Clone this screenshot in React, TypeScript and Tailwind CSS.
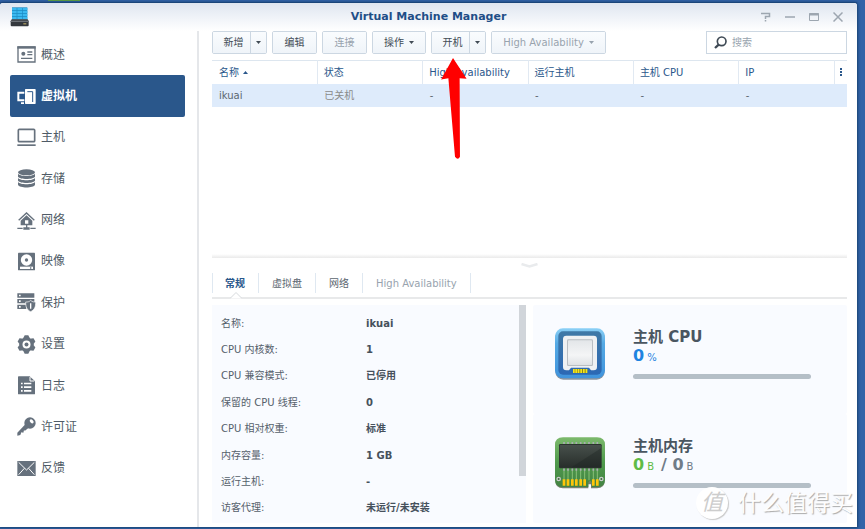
import type { ReactNode } from "react";
import clsx from "clsx";

const navItems = [
  { id: "overview", label: "概述" },
  { id: "vm", label: "虚拟机" },
  { id: "host", label: "主机" },
  { id: "storage", label: "存储" },
  { id: "network", label: "网络" },
  { id: "image", label: "映像" },
  { id: "protection", label: "保护" },
  { id: "settings", label: "设置" },
  { id: "log", label: "日志" },
  { id: "license", label: "许可证" },
  { id: "feedback", label: "反馈" },
];

const columns = ["状态", "High Availability", "运行主机", "主机 CPU", "IP"];

const tabs = [
  { label: "常规", active: true },
  { label: "虚拟盘" },
  { label: "网络" },
  { label: "High Availability", disabled: true },
];

const details = [
  ["名称:", "ikuai"],
  ["CPU 内核数:", "1"],
  ["CPU 兼容模式:", "已停用"],
  ["保留的 CPU 线程:", "0"],
  ["CPU 相对权重:", "标准"],
  ["内存容量:", "1 GB"],
  ["运行主机:", "-"],
  ["访客代理:", "未运行/未安装"],
];

const navShapes: Record<string, ReactNode> = {
  overview: (
    <>
      <path d="M3 6h51v45H3z" fill="none" stroke="currentColor" strokeWidth="4" />
      <path d="M1 4h55v7H1z" />
      <circle cx="19" cy="26" r="6" />
      <path d="M31 19h15v4H31zM31 27h15v4H31zM12 38h34v4H12z" />
    </>
  ),
  vm: (
    <>
      <path d="M22 17H4v23h18" fill="none" stroke="currentColor" strokeWidth="6" />
      <path d="M12 46h9v5h-9zM26 6h28q2 0 2 2v41q0 2-2 2H26q-2 0-2-2V8q0-2 2-2z" />
      <path d="M31 14h16v31" fill="none" stroke="#2a578b" strokeWidth="3" />
    </>
  ),
  host: (
    <>
      <rect x="4" y="4" width="49" height="37" rx="3" fill="none" stroke="currentColor" strokeWidth="5" />
      <path d="M1 49h55v5H1z" />
    </>
  ),
  storage: (
    <>
      <ellipse cx="28.5" cy="10" rx="25.5" ry="9" />
      <path d="M3 14c6 9 45 9 51 0v9c-6 9-45 9-51 0z" />
      <path d="M3 27c6 9 45 9 51 0v8c-6 9-45 9-51 0z" />
      <path d="M3 39c6 9 45 9 51 0v8c-4 11-47 11-51 0z" />
    </>
  ),
  network: (
    <>
      <path d="M5 28 28.500 6 52 28" fill="none" stroke="currentColor" strokeWidth="4" />
      <path d="M28.500 13 46 29v14H11V29zM24 28v10h10V28z" fillRule="evenodd" />
      <path d="M27 42h4v7h7v7H19v-7h8zM1 50h16v4H1zM40 50h16v4H40z" />
    </>
  ),
  image: (
    <>
      <rect x="3" y="2" width="51" height="53" rx="2" />
      <circle cx="28.500" cy="24" r="17" fill="#fff" />
      <circle cx="28.500" cy="24" r="5" />
      <path d="M9 44h39v7H9z" fill="#fff" />
      <path d="M39 46h4v4h-4z" />
    </>
  ),
  protection: (
    <>
      <path d="M1 1h51v13H1zM1 18h51v13H1zM1 35h27v13H1z" />
      <path d="M6 5h5v5H6zM6 22h5v5H6zM6 39h5v5H6z" fill="#fff" />
      <path d="M41 22c5 5 9 5 15 5 0 15-3 23-15 29-12-6-15-14-15-29 6 0 10 0 15-5z" stroke="#fff" strokeWidth="2" />
      <path d="M39 31h4v16h-4z" fill="#fff" />
    </>
  ),
  settings: (
    <>
      <circle cx="28.500" cy="28.500" r="22" />
      <path d="M20 7 23 1h11l3 6v43l-3 6H23l-3-6z" />
      <path d="M20 7 23 1h11l3 6v43l-3 6H23l-3-6z" transform="rotate(60 28.500 28.500)" />
      <path d="M20 7 23 1h11l3 6v43l-3 6H23l-3-6z" transform="rotate(120 28.500 28.500)" />
      <circle cx="28.500" cy="28.500" r="12" fill="#fff" />
      <circle cx="28.500" cy="28.500" r="6" />
    </>
  ),
  log: (
    <>
      <path d="M5 1h33l16 15v37q0 2-2 2H5q-2 0-2-2V3q0-2 2-2z" />
      <path d="M39 3v12h13" fill="none" stroke="#fff" strokeWidth="3" />
      <path d="M12 20h5v5h-5zM21 20h22v5H21zM12 31h5v5h-5zM21 31h22v5H21zM12 42h5v5h-5zM21 42h22v5H21z" fill="#fff" />
    </>
  ),
  license: (
    <>
      <circle cx="39" cy="18" r="17" />
      <path d="M25 22 35 32 24 41l-3-1-2 7-6-1-3 8-9 2v-9z" />
      <ellipse cx="44" cy="13" rx="7" ry="4.500" transform="rotate(45 44 13)" fill="#fff" />
    </>
  ),
  feedback: (
    <>
      <path d="M1 6h55v45H1z" />
      <path d="M5 10 28.500 33 52 10M5 47 22 28M52 47 35 28" fill="none" stroke="#fff" strokeWidth="3" />
    </>
  ),
};

function NavIcon({ id }: { id: string }) {
  return (
    <svg viewBox="0 0 57 57" className="size-[19px] shrink-0" fill="currentColor" aria-hidden="true">
      {navShapes[id]}
    </svg>
  );
}

function AppIcon() {
  return (
    <svg viewBox="0 0 57 60" className="h-5 w-[19px]" aria-hidden="true">
      <path d="M6 1h46v36H6z" fill="#1d8cc4" />
      <path
        d="M6 3h14v7H6zM22 3h14v7H22zM38 3h14v7H38zM6 12h14v7H6zM22 12h14v7H22zM38 12h14v7H38zM6 21h14v7H6zM22 21h14v7H22zM38 21h14v7H38zM6 30h14v7H6zM22 30h14v7H22zM38 30h14v7H38z"
        fill="#3bb9f0"
      />
      <path d="M5 37h48l3 6v12q0 3-3 3H5q-3 0-3-3V43z" fill="#34383d" />
      <path d="M2 41h54v4H2z" fill="#6b7076" />
      <path d="M40 49h9v3h-9z" fill="#c9b46b" />
    </svg>
  );
}

function Caret({ className }: { className?: string }) {
  return (
    <svg viewBox="0 0 5 3" className={clsx("h-[3px] w-[5px]", className)} fill="currentColor" aria-hidden="true">
      <path d="M0 0h5L2.500 3z" />
    </svg>
  );
}

const buttonBase =
  "flex h-full items-center justify-center bg-linear-to-b from-[#fafcfe] to-[#eff4f9] whitespace-nowrap";
const frame = "h-[23px] overflow-hidden rounded-[2px] border border-[#ccd7e2]";

function ToolButton({
  children,
  className,
  disabled,
}: {
  children: ReactNode;
  className: string;
  disabled?: boolean;
}) {
  return (
    <div className={clsx(frame, className)}>
      <button
        type="button"
        disabled={disabled}
        className={clsx(buttonBase, "w-full gap-[5px]", disabled ? "text-[#98a3ae]" : "text-[#414b55]")}
      >
        {children}
      </button>
    </div>
  );
}

function SplitButton({ label }: { label: string }) {
  return (
    <div className={clsx(frame, "flex w-[55px] text-[#414b55]")}>
      <button type="button" className={clsx(buttonBase, "flex-1 pl-1")}>
        {label}
      </button>
      <button type="button" aria-label={`${label}菜单`} className={clsx(buttonBase, "w-4 border-l border-[#ccd7e2]")}>
        <Caret />
      </button>
    </div>
  );
}

function CpuIcon() {
  return (
    <svg viewBox="0 0 150 156" className="h-[52px] w-[50px] shrink-0" aria-hidden="true">
      <defs>
        <linearGradient id="cpuOuter" x2="0" y2="1">
          <stop offset="0" stopColor="#8bd0f6" />
          <stop offset="0.3" stopColor="#55a9e4" />
          <stop offset="1" stopColor="#4093dc" />
        </linearGradient>
        <linearGradient id="cpuInner" x2="0" y2="1">
          <stop offset="0" stopColor="#3f79a6" />
          <stop offset="1" stopColor="#2c68b4" />
        </linearGradient>
        <linearGradient id="cpuDie" x2="0" y2="1">
          <stop offset="0" stopColor="#e3e6e9" />
          <stop offset="0.6" stopColor="#f4f5f6" />
          <stop offset="1" stopColor="#dfe2e5" />
        </linearGradient>
      </defs>
      <rect x="1" y="5" width="148" height="150" rx="24" fill="#8d959e" />
      <rect x="0" y="1" width="150" height="150" rx="24" fill="url(#cpuOuter)" />
      <rect x="10" y="10" width="130" height="130" rx="14" fill="url(#cpuInner)" />
      <path
        d="M34 23h82q10 0 10 10v84q0 10-10 10h-8l-6-8H48l-6 8h-8q-10 0-10-10V33q0-10 10-10z"
        fill="#eff1f3"
      />
      <rect x="36" y="34" width="78" height="80" rx="4" fill="#b9bec3" />
      <rect x="39" y="37" width="72" height="74" rx="2" fill="url(#cpuDie)" />
      <path d="M54 123h42v12H54z" fill="#8b8420" />
      <path d="M54 123h5v12h-5zM61 123h5v12h-5zM68 123h5v12h-5zM76 123h5v12h-5zM84 123h5v12h-5zM92 123h5v12h-5z" fill="#f5e61c" />
    </svg>
  );
}

function MemoryIcon() {
  return (
    <svg viewBox="0 0 150 156" className="h-[52px] w-[50px] shrink-0" aria-hidden="true">
      <defs>
        <linearGradient id="memBoard" x2="0" y2="1">
          <stop offset="0" stopColor="#7cb96c" />
          <stop offset="0.5" stopColor="#4f9a4c" />
          <stop offset="1" stopColor="#438343" />
        </linearGradient>
        <linearGradient id="memChip" x2="0" y2="1">
          <stop offset="0" stopColor="#47504b" />
          <stop offset="1" stopColor="#282e2b" />
        </linearGradient>
      </defs>
      <path d="M24 5h102q23 0 23 22v105q0 22-23 22h-18v-12h-8v12H24q-23 0-23-22V27Q1 5 24 5z" fill="#77806f" />
      <path d="M24 1h102q24 0 24 23v104q0 22-24 22h-16v-14q-5-8-10 0v14H24q-24 0-24-22V24Q0 1 24 1z" fill="url(#memBoard)" />
      <path d="M27 94v36M39 94v36M52 94v36M64 94v36M77 94v36M89 94v36M102 94v36M115 94v36M127 94v36" stroke="#87c176" strokeWidth="3" />
      <path d="M27 15v7M39 15v7M52 15v7M64 15v7M77 15v7M89 15v7M102 15v7M115 15v7M127 15v7M27 94v7M39 94v7M52 94v7M64 94v7M77 94v7M89 94v7M102 94v7M115 94v7M127 94v7" stroke="#a9adb0" strokeWidth="5" />
      <rect x="12" y="21" width="128" height="73" rx="4" fill="#2c332f" />
      <rect x="14" y="24" width="124" height="67" rx="2" fill="url(#memChip)" />
      <path d="M138 34v57H50z" fill="#1f2522" opacity="0.4" />
      <path d="M23 127h8v19h-8zM35 127h8v19h-8zM48 127h8v19h-8zM60 127h8v19h-8zM73 127h8v19h-8zM85 127h8v19h-8zM111 127h8v19h-8zM123 127h8v19h-8z" fill="#ffc60a" />
      <circle cx="11" cy="126" r="5" fill="#3e6a3d" stroke="#c9cdca" strokeWidth="4" />
      <circle cx="139" cy="126" r="5" fill="#3e6a3d" stroke="#c9cdca" strokeWidth="4" />
    </svg>
  );
}

function UsageCard({ icon, title, children }: { icon: ReactNode; title: string; children: ReactNode }) {
  return (
    <section className="flex flex-1 items-start rounded-[2px] bg-[#f9fbff] pt-[23px] pr-9 pl-[22px]">
      {icon}
      <div className="ml-7 min-w-0 flex-1">
        <h2 className="text-[15px] leading-[18px] font-bold text-[#4a5661]">{title}</h2>
        <p className="flex items-baseline gap-[3px] text-base leading-5 font-bold">{children}</p>
        <div className="mt-[6px] h-[5px] rounded-full bg-[#b5bfc7]" />
      </div>
    </section>
  );
}

export default function App() {
  return (
    <div className="flex h-screen flex-col bg-[#3263a8] pr-2 pb-0.5 font-['DejaVu_Sans','Noto_Sans_CJK_SC',sans-serif] text-[10px] text-[#5b6670]">
      <div className="h-[3px] shrink-0 border-b border-[#265291] pl-12">
        <div className="h-px w-8 bg-[#63a53c]" />
      </div>

      <div className="relative flex min-h-0 flex-1 flex-col rounded-t-[3px] bg-white shadow-[0_0_3px_1px_#17406f]">
        <header className="flex h-7 shrink-0 items-center rounded-t-[3px] bg-linear-to-b from-[#dfe6f0] to-white">
          <div className="w-24 pl-2.5">
            <AppIcon />
          </div>
          <h1 className="flex-1 text-center text-[11px] font-bold text-[#1f4e87]">Virtual Machine Manager</h1>
          <div className="flex w-24 items-center justify-between pr-[14px] text-[#9da6b0]">
            <button type="button" aria-label="帮助">
              <svg viewBox="0 0 10 10" className="size-2.5" fill="none" stroke="currentColor" strokeWidth="1.500">
                <path d="M0 1.500h8.500v3H4.500v2.500M4.500 8v1.500" />
              </svg>
            </button>
            <button type="button" aria-label="最小化">
              <svg viewBox="0 0 10 10" className="size-2.5" stroke="currentColor" strokeWidth="1.500">
                <path d="M0 5h10" />
              </svg>
            </button>
            <button type="button" aria-label="最大化">
              <svg viewBox="0 0 10 10" className="size-2.5" fill="none" stroke="currentColor">
                <path d="M.5 1.500h9v7h-9z" />
                <path d="M0 2.500h10" strokeWidth="2" />
              </svg>
            </button>
            <button type="button" aria-label="关闭">
              <svg viewBox="0 0 10 10" className="size-2.5" stroke="currentColor" strokeWidth="1.500">
                <path d="M.5.5l9 9M9.500.5l-9 9" />
              </svg>
            </button>
          </div>
        </header>

        <div className="flex min-h-0 flex-1">
          <nav className="flex w-[199px] shrink-0 flex-col border-r-2 border-[#e5e7ea] pt-[3px] pr-3 pb-[38px] pl-2.5">
            <ul className="flex flex-1 flex-col text-xs">
              {navItems.map((item) => (
                <li key={item.id} className="min-h-0 flex-1">
                  <a
                    href={`#${item.id}`}
                    className={clsx(
                      "flex h-full items-center gap-[5px] rounded-[2px] pl-[7px]",
                      item.id === "vm" ? "bg-[#2a578b] font-bold text-white" : "text-[#66717d]"
                    )}
                  >
                    <NavIcon id={item.id} />
                    <span className={item.id === "vm" ? "text-white" : "text-[#4f5b66]"}>{item.label}</span>
                  </a>
                </li>
              ))}
            </ul>
          </nav>

          <main className="flex min-w-0 flex-1 flex-col pr-2.5 pb-1 pl-[13px]">
            <div className="flex items-center gap-[5px]">
              <SplitButton label="新增" />
              <ToolButton className="w-[45px]">编辑</ToolButton>
              <ToolButton className="w-[45px]" disabled>
                连接
              </ToolButton>
              <ToolButton className="w-[54px]">
                操作
                <Caret />
              </ToolButton>
              <div className="relative">
                <SplitButton label="开机" />
                {/* callout pointing at the power-on button */}
                <svg
                  viewBox="0 0 78 308"
                  className="pointer-events-none absolute top-[27px] left-2.5 z-10 h-[102px] w-[26px]"
                  aria-hidden="true"
                >
                  <path d="M36 0 77 63 56 61 57 298q-6 12-15 0L22 61 0 65z" fill="#ff0000" />
                </svg>
              </div>
              <ToolButton className="w-[115px]" disabled>
                High Availability
                <Caret />
              </ToolButton>
              <label className="ml-auto flex h-[23px] w-[141px] items-center gap-[5px] border border-[#ccd7e2] bg-white pl-[7px]">
                <svg viewBox="0 0 39 39" className="size-[13px] shrink-0" fill="none" stroke="#3f4a55" aria-hidden="true">
                  <circle cx="23" cy="16" r="13" strokeWidth="5" />
                  <path d="M14 26 3 36" strokeWidth="7" />
                </svg>
                <input
                  type="search"
                  aria-label="搜索"
                  placeholder="搜索"
                  className="w-full min-w-0 bg-transparent outline-none placeholder:text-[#98a3ae]"
                />
              </label>
            </div>

            <table className="mt-1.5 w-full table-fixed border-t border-[#dde6ef] text-left">
              <thead>
                <tr className="h-[23px] text-[#2a578b]">
                  <th className="pl-[7px] font-normal">
                    <span className="flex items-center gap-1">
                      名称
                      <Caret className="rotate-180" />
                    </span>
                  </th>
                  {columns.map((name) => (
                    <th
                      key={name}
                      className={clsx(
                        "border-l border-[#e1e9f2] pl-[6px] font-normal whitespace-nowrap",
                        name === "IP" && "w-[15%]"
                      )}
                    >
                      {name}
                    </th>
                  ))}
                  <th className="w-[13px] border-l border-[#e1e9f2]">
                    <button type="button" aria-label="列" className="flex w-full justify-center">
                      <svg viewBox="0 0 2 8" className="h-2 w-0.5" fill="currentColor">
                        <path d="M0 0h2v2H0zM0 3h2v2H0zM0 6h2v2H0z" />
                      </svg>
                    </button>
                  </th>
                </tr>
              </thead>
              <tbody>
                <tr className="h-[23px] bg-[#deebfb]">
                  <td className="pl-[7px]">ikuai</td>
                  <td className="pl-[7px] text-[#8a8a8a]">已关机</td>
                  <td className="pl-[7px]">-</td>
                  <td className="pl-[7px]">-</td>
                  <td className="pl-[7px]">-</td>
                  <td className="pl-[7px]">-</td>
                  <td />
                </tr>
              </tbody>
            </table>

            <div className="mt-auto h-1 shrink-0 bg-linear-to-b from-white to-[#eaeaea]" />
            <div className="flex h-[15px] shrink-0 justify-center pt-[5px]">
              <svg viewBox="0 0 17 5" className="h-[5px] w-[17px]" fill="none" stroke="#e9ebed" strokeWidth="2.500">
                <path d="M.5 1 8.500 3.500 16.500 1" />
              </svg>
            </div>

            <div role="tablist" className="flex h-[26px] shrink-0 items-start border-b-2 border-[#e8e9ea]">
              {tabs.map((tab) => (
                <button
                  key={tab.label}
                  type="button"
                  role="tab"
                  aria-selected={!!tab.active}
                  disabled={tab.disabled}
                  className={clsx(
                    "relative h-5 border-r border-[#dfe8f1] pr-[13px]",
                    tab.active ? "border-l pl-3 font-bold text-[#2a578b]" : "pl-[13px]",
                    tab.disabled && "text-[#98a3ae]"
                  )}
                >
                  {tab.label}
                  {tab.active && (
                    <svg
                      viewBox="0 0 12 7"
                      className="absolute top-[19px] left-[17px] h-[7px] w-3"
                      fill="#fff"
                      stroke="#d6d9dc"
                      aria-hidden="true"
                    >
                      <path d="M0 6.500 6 .5l6 6" />
                    </svg>
                  )}
                </button>
              ))}
            </div>

            <div className="mt-[6px] flex h-[218px] shrink-0 gap-[7px]">
              <div className="flex min-w-0 flex-1 bg-[#f9fbff]">
                <dl className="flex min-w-0 flex-1 flex-col pt-[5px] pb-0.5 pl-[9px]">
                  {details.map(([label, value]) => (
                    <div key={label} className="flex min-h-0 flex-1 items-center">
                      <dt className="w-[145px] shrink-0 text-[#55606b]">{label}</dt>
                      <dd className="font-bold text-[#46515c]">{value}</dd>
                    </div>
                  ))}
                </dl>
                <div className="h-[171px] w-[7px] bg-[#d1d5da]" />
              </div>
              <div className="flex min-w-0 flex-1 flex-col">
                <UsageCard icon={<CpuIcon />} title="主机 CPU">
                  <span className="text-[#1f83e0]">0</span>
                  <span className="text-[10px] font-normal text-[#1f83e0]">%</span>
                </UsageCard>
                <UsageCard icon={<MemoryIcon />} title="主机内存">
                  <span className="text-[#5fbb46]">0</span>
                  <span className="text-[10px] font-normal text-[#5fbb46]">B</span>
                  <span className="pl-1 text-[#707c88]">/ 0</span>
                  <span className="text-[10px] font-normal text-[#707c88]">B</span>
                </UsageCard>
              </div>
            </div>
          </main>
        </div>

        {/* site watermark */}
        <div
          aria-hidden="true"
          className="pointer-events-none absolute right-1 bottom-2 flex items-center gap-2.5 text-[#fdfdfd]"
        >
          <span className="flex size-8 items-center justify-center rounded-full bg-white text-[22px] leading-none text-[#cdcdcd] italic shadow-[1px_1px_1px_#c9c9c9]">
            值
          </span>
          <span className="text-[23px] leading-8 [text-shadow:1px_1px_1px_#a9a9a9]">什么值得买</span>
        </div>
      </div>
    </div>
  );
}
